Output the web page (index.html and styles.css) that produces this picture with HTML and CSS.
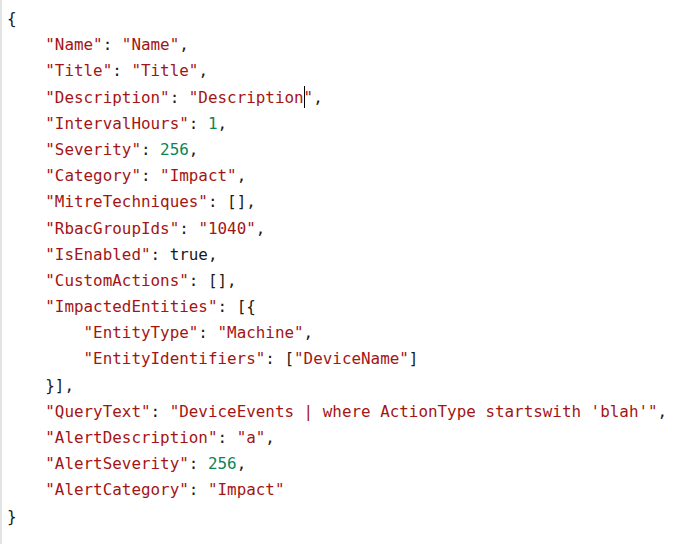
FILE: index.html
```html
<!DOCTYPE html>
<html>
<head>
<meta charset="utf-8">
<link rel="stylesheet" href="styles.css">
</head>
<body>
<div class="editor">
<pre class="code"><div class="ln"><span class="p">{</span></div><div class="ln">    <span class="s">"Name"</span><span class="p">: </span><span class="s">"Name"</span><span class="p">,</span></div><div class="ln">    <span class="s">"Title"</span><span class="p">: </span><span class="s">"Title"</span><span class="p">,</span></div><div class="ln">    <span class="s">"Description"</span><span class="p">: </span><span class="s">"Description<span class="caret"></span>"</span><span class="p">,</span></div><div class="ln">    <span class="s">"IntervalHours"</span><span class="p">: </span><span class="n">1</span><span class="p">,</span></div><div class="ln">    <span class="s">"Severity"</span><span class="p">: </span><span class="n">256</span><span class="p">,</span></div><div class="ln">    <span class="s">"Category"</span><span class="p">: </span><span class="s">"Impact"</span><span class="p">,</span></div><div class="ln">    <span class="s">"MitreTechniques"</span><span class="p">: </span><span class="b">[]</span><span class="p">,</span></div><div class="ln">    <span class="s">"RbacGroupIds"</span><span class="p">: </span><span class="s">"1040"</span><span class="p">,</span></div><div class="ln">    <span class="s">"IsEnabled"</span><span class="p">: true,</span></div><div class="ln">    <span class="s">"CustomActions"</span><span class="p">: </span><span class="b">[]</span><span class="p">,</span></div><div class="ln">    <span class="s">"ImpactedEntities"</span><span class="p">: </span><span class="b">[{</span></div><div class="ln">        <span class="s">"EntityType"</span><span class="p">: </span><span class="s">"Machine"</span><span class="p">,</span></div><div class="ln">        <span class="s">"EntityIdentifiers"</span><span class="p">: </span><span class="b">[</span><span class="s">"DeviceName"</span><span class="b">]</span></div><div class="ln">    <span class="b">}]</span><span class="p">,</span></div><div class="ln">    <span class="s">"QueryText"</span><span class="p">: </span><span class="s">"DeviceEvents | where ActionType startswith 'blah'"</span><span class="p">,</span></div><div class="ln">    <span class="s">"AlertDescription"</span><span class="p">: </span><span class="s">"a"</span><span class="p">,</span></div><div class="ln">    <span class="s">"AlertSeverity"</span><span class="p">: </span><span class="n">256</span><span class="p">,</span></div><div class="ln">    <span class="s">"AlertCategory"</span><span class="p">: </span><span class="s">"Impact"</span></div><div class="ln"><span class="p">}</span></div></pre>
</div>
</body>
</html>
```

FILE: styles.css
```css
html, body {
  margin: 0;
  padding: 0;
  background: #ffffff;
}

.editor {
  width: 682px;
  height: 544px;
  box-sizing: border-box;
  border-left: 2px solid #e3e3e3;
  padding: 6px 0 0 5px;
  overflow: hidden;
}

.code {
  margin: 0;
  font-family: "DejaVu Sans Mono", "Liberation Mono", monospace;
  font-size: 15.9px;
  line-height: 26.2px;
  color: #1a1a1a;
  white-space: pre;
}

.ln {
  height: 26.2px;
}

.s {
  color: #a31515;
}

.n {
  color: #098658;
}

.p {
  color: #1a1a1a;
}

.b {
  color: #1a1a1a;
}

.caret {
  display: inline-block;
  width: 1px;
  height: 22px;
  margin-right: -1px;
  background: #000000;
  vertical-align: -5px;
}
```
